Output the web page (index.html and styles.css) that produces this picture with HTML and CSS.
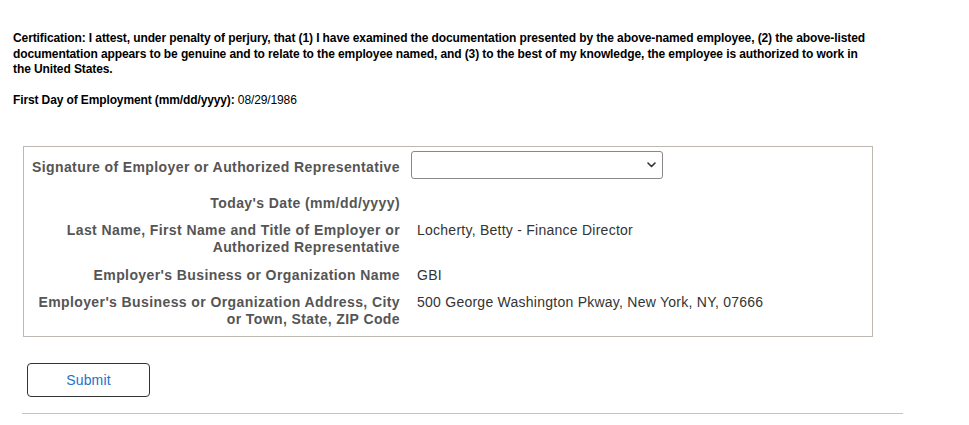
FILE: index.html
```html
<!DOCTYPE html>
<html lang="en">
<head>
<meta charset="utf-8">
<title>Certification</title>
<link rel="stylesheet" href="styles.css">
</head>
<body>
<div class="page">
  <p class="cert">Certification: I attest, under penalty of perjury, that (1) I have examined the documentation presented by the above-named employee, (2) the above-listed documentation appears to be genuine and to relate to the employee named, and (3) to the best of my knowledge, the employee is authorized to work in the United States.</p>
  <p class="first-day"><span class="strong">First Day of Employment (mm/dd/yyyy):</span> 08/29/1986</p>

  <div class="form-box">
    <label class="label label-center" for="sig">Signature of Employer or Authorized Representative</label>
    <div class="select-wrap">
      <select id="sig" class="select"><option></option></select>
      <svg class="chevron" width="9" height="6" viewBox="0 0 9 6" aria-hidden="true"><path d="M1 1 L4.5 4.5 L8 1" fill="none" stroke="#333" stroke-width="1.6" stroke-linecap="round" stroke-linejoin="round"/></svg>
    </div>

    <div class="label">Today's Date (mm/dd/yyyy)</div>
    <div class="value"></div>

    <div class="label">Last Name, First Name and Title of Employer or Authorized Representative</div>
    <div class="value">Locherty, Betty - Finance Director</div>

    <div class="label">Employer's Business or Organization Name</div>
    <div class="value">GBI</div>

    <div class="label">Employer's Business or Organization Address, City or Town, State, ZIP Code</div>
    <div class="value">500 George Washington Pkway, New York, NY, 07666</div>
  </div>

  <button class="submit" type="button">Submit</button>
  <hr class="divider">
</div>
</body>
</html>
```
FILE: styles.css
```css
html, body {
  margin: 0;
  padding: 0;
  background: #ffffff;
}

.page {
  padding: 31px 0 0 13px;
  font-family: "Liberation Sans", Arial, sans-serif;
}

.cert {
  margin: 0;
  width: 860px;
  font-size: 12px;
  line-height: 15.5px;
  letter-spacing: -0.1px;
  font-weight: bold;
  color: #000;
}

.first-day {
  margin: 15.5px 0 0 0;
  font-size: 12px;
  line-height: 15.5px;
  letter-spacing: -0.12px;
  color: #000;
}

.strong {
  font-weight: bold;
}

.form-box {
  box-sizing: border-box;
  margin: 37px 0 0 10px;
  width: 850px;
  border: 1px solid #bdb8b1;
  padding: 4px 0 7.5px 4px;
  display: grid;
  grid-template-columns: 372px 1fr;
  column-gap: 11px;
  row-gap: 10.5px;
  font-size: 14px;
  line-height: 17px;
}

.label {
  text-align: right;
  font-weight: bold;
  letter-spacing: 0.4px;
  color: #555555;
}

.label-center {
  align-self: center;
}

.value {
  padding-left: 6px;
  color: #333333;
  letter-spacing: 0.25px;
  min-height: 17px;
}

.select-wrap {
  position: relative;
  width: 252px;
  height: 28px;
  margin-bottom: 5.5px;
}

.select {
  box-sizing: border-box;
  width: 252px;
  height: 28px;
  margin: 0;
  border: 1px solid #8a8784;
  border-radius: 3px;
  background: #fff;
  -webkit-appearance: none;
  appearance: none;
  font-family: "Liberation Sans", Arial, sans-serif;
  font-size: 14px;
}

.chevron {
  position: absolute;
  right: 7px;
  top: 11px;
  pointer-events: none;
}

.submit {
  display: block;
  box-sizing: border-box;
  margin: 26px 0 0 14px;
  width: 123px;
  height: 34px;
  border: 1px solid #333333;
  border-radius: 4px;
  background: #ffffff;
  color: #2472c8;
  font-family: "Liberation Sans", Arial, sans-serif;
  font-size: 14px;
  letter-spacing: 0.15px;
  padding: 0;
}

.divider {
  margin: 16px 0 0 9px;
  width: 881px;
  height: 0;
  border: 0;
  border-top: 1px solid #c4c4c4;
}
```
